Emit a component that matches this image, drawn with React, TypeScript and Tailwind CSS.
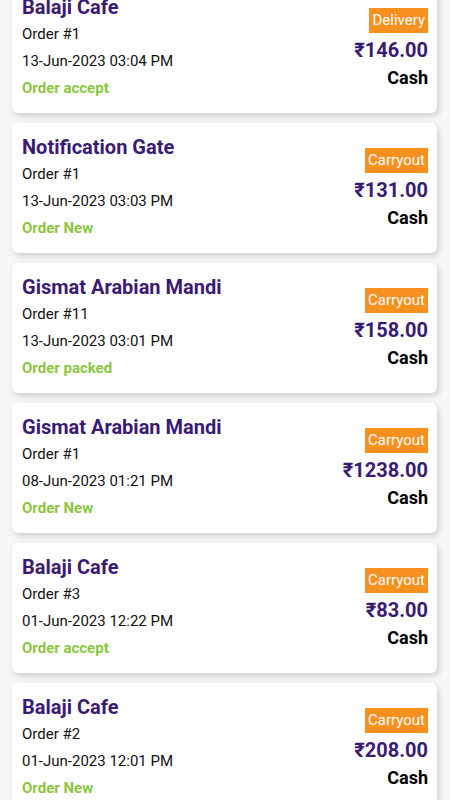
const ORDERS = [
  { name: 'Balaji Cafe', no: 1, date: '13-Jun-2023 03:04 PM', status: 'Order accept', type: 'Delivery', amount: '146.00' },
  { name: 'Notification Gate', no: 1, date: '13-Jun-2023 03:03 PM', status: 'Order New', type: 'Carryout', amount: '131.00' },
  { name: 'Gismat Arabian Mandi', no: 11, date: '13-Jun-2023 03:01 PM', status: 'Order packed', type: 'Carryout', amount: '158.00' },
  { name: 'Gismat Arabian Mandi', no: 1, date: '08-Jun-2023 01:21 PM', status: 'Order New', type: 'Carryout', amount: '1238.00' },
  { name: 'Balaji Cafe', no: 3, date: '01-Jun-2023 12:22 PM', status: 'Order accept', type: 'Carryout', amount: '83.00' },
  { name: 'Balaji Cafe', no: 2, date: '01-Jun-2023 12:01 PM', status: 'Order New', type: 'Carryout', amount: '208.00' },
]

function OrderCard({ o }: { o: (typeof ORDERS)[number] }) {
  return (
    <div className="flex items-center justify-between rounded-[6px] bg-white pl-[10px] pr-[9px] pt-[10px] pb-[11px] shadow-[2px_3px_6px_rgba(0,0,0,0.16)]">
      <div className="flex flex-col">
        <div className="h-[28px] text-[20px] font-bold leading-[28px] text-[#3b1a74]">{o.name}</div>
        <div className="h-[27px] text-[15px] leading-[27px] text-[#111]">Order #{o.no}</div>
        <div className="h-[27px] text-[15px] leading-[27px] text-[#111]">{o.date}</div>
        <div className="h-[27px] text-[15px] font-bold leading-[27px] text-[#8cc63f]">{o.status}</div>
      </div>
      <div className="mt-[4px] flex flex-col items-end">
        <div className="bg-[#f7901e] px-[3px] text-[15px] leading-[25px] text-white">{o.type}</div>
        <div className="mt-[2px] text-[20px] font-bold leading-[30px] text-[#3b1a74]">₹{o.amount}</div>
        <div className="text-[18px] font-bold leading-[26px] text-black">Cash</div>
      </div>
    </div>
  )
}

export default function App() {
  return (
    <div className="h-[800px] overflow-hidden bg-[#f7f7f7]" style={{ fontFamily: 'Roboto, "Noto Sans", sans-serif' }}>
      <div className="-mt-[17px] flex flex-col gap-[10px] pl-[12px] pr-[13px]">
        {ORDERS.map((o, i) => <OrderCard key={i} o={o} />)}
      </div>
    </div>
  )
}
